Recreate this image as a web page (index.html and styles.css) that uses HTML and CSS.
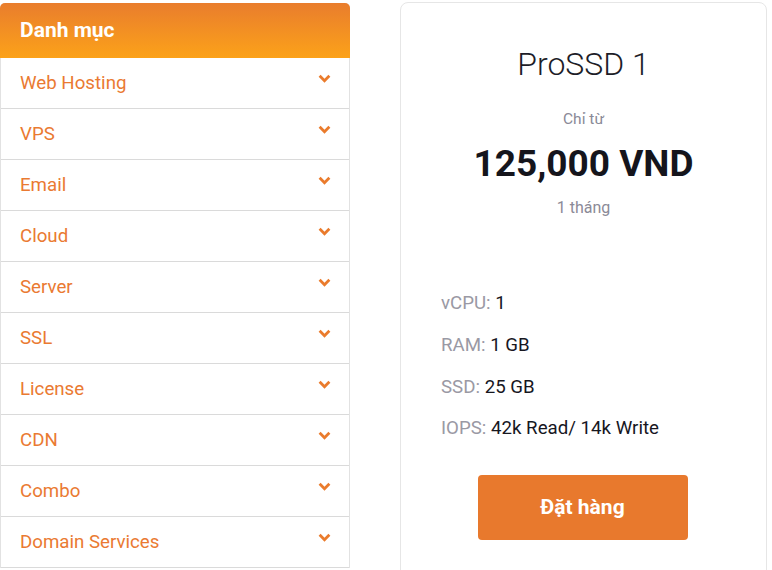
FILE: index.html
```html
<!DOCTYPE html>
<html lang="vi">
<head>
<meta charset="utf-8">
<link rel="stylesheet" href="styles.css">
</head>
<body>
<div class="page">
  <aside class="sidebar">
    <div class="sidebar-head">Danh mục</div>
    <ul class="menu">
      <li class="menu-item"><span>Web Hosting</span><svg class="chev" viewBox="0 0 12 8"><path d="M1.5 1.5 L6 6 L10.5 1.5"/></svg></li>
      <li class="menu-item"><span>VPS</span><svg class="chev" viewBox="0 0 12 8"><path d="M1.5 1.5 L6 6 L10.5 1.5"/></svg></li>
      <li class="menu-item"><span>Email</span><svg class="chev" viewBox="0 0 12 8"><path d="M1.5 1.5 L6 6 L10.5 1.5"/></svg></li>
      <li class="menu-item"><span>Cloud</span><svg class="chev" viewBox="0 0 12 8"><path d="M1.5 1.5 L6 6 L10.5 1.5"/></svg></li>
      <li class="menu-item"><span>Server</span><svg class="chev" viewBox="0 0 12 8"><path d="M1.5 1.5 L6 6 L10.5 1.5"/></svg></li>
      <li class="menu-item"><span>SSL</span><svg class="chev" viewBox="0 0 12 8"><path d="M1.5 1.5 L6 6 L10.5 1.5"/></svg></li>
      <li class="menu-item"><span>License</span><svg class="chev" viewBox="0 0 12 8"><path d="M1.5 1.5 L6 6 L10.5 1.5"/></svg></li>
      <li class="menu-item"><span>CDN</span><svg class="chev" viewBox="0 0 12 8"><path d="M1.5 1.5 L6 6 L10.5 1.5"/></svg></li>
      <li class="menu-item"><span>Combo</span><svg class="chev" viewBox="0 0 12 8"><path d="M1.5 1.5 L6 6 L10.5 1.5"/></svg></li>
      <li class="menu-item"><span>Domain Services</span><svg class="chev" viewBox="0 0 12 8"><path d="M1.5 1.5 L6 6 L10.5 1.5"/></svg></li>
    </ul>
  </aside>
  <section class="card">
    <h2 class="plan-name">ProSSD 1</h2>
    <div class="from">Chỉ từ</div>
    <div class="price">125,000 VND</div>
    <div class="period">1 tháng</div>
    <ul class="specs">
      <li><span class="lbl">vCPU:</span> <span class="val">1</span></li>
      <li><span class="lbl">RAM:</span> <span class="val">1 GB</span></li>
      <li><span class="lbl">SSD:</span> <span class="val">25 GB</span></li>
      <li><span class="lbl">IOPS:</span> <span class="val">42k Read/ 14k Write</span></li>
    </ul>
    <div class="btn-wrap"><a class="btn">Đặt hàng</a></div>
  </section>
</div>
</body>
</html>
```
FILE: styles.css
```css
* { box-sizing: border-box; }
html, body { margin: 0; padding: 0; background: #fff; }
body { font-family: Roboto, "Noto Sans", sans-serif; overflow: hidden; }
.page {
  display: flex;
  align-items: flex-start;
  gap: 50px;
  height: 570px;
  overflow: hidden;
}
.sidebar {
  width: 350px;
  flex: none;
  margin-top: 3px;
  border-left: 1px solid #e2e2e2;
  border-right: 1px solid #e2e2e2;
  border-radius: 5px 5px 0 0;
}
.sidebar-head {
  height: 55px;
  margin: 0 -1px;
  border-radius: 5px 5px 0 0;
  background: linear-gradient(to bottom, #e97d2d, #fca219);
  color: #fff;
  font-weight: 700;
  font-size: 21px;
  padding-left: 20px;
  display: flex;
  align-items: center;
  padding-bottom: 2px;
}
.menu { list-style: none; margin: 0; padding: 0; }
.menu-item {
  height: 51px;
  border-bottom: 1px solid #dadada;
  display: flex;
  align-items: center;
  justify-content: space-between;
  padding: 0 18px 0 19px;
  color: #ea7a32;
  font-size: 18.7px;
}
.chev {
  width: 13px;
  height: 9px;
  margin-top: -10px;
  fill: none;
  stroke: #ea7b2c;
  stroke-width: 2.6;
}
.card {
  width: 367px;
  flex: none;
  margin-top: 2px;
  height: 600px;
  border: 1px solid #e6e6e6;
  border-radius: 8px;
  text-align: center;
  padding-top: 41px;
}
.plan-name {
  margin: 0;
  font-weight: 300;
  font-size: 32px;
  line-height: 40px;
  color: #1d1d28;
}
.from {
  margin-top: 25px;
  font-size: 15.5px;
  color: #8b8a97;
  line-height: 20px;
}
.price {
  margin-top: 12px;
  font-size: 37px;
  font-weight: 700;
  color: #15151c;
  line-height: 46px;
}
.period {
  margin-top: 11px;
  font-size: 16px;
  color: #8b8a97;
  line-height: 20px;
}
.specs {
  list-style: none;
  margin: 74px 0 0;
  padding: 0 0 0 40px;
  text-align: left;
  font-size: 18.7px;
  line-height: 22px;
}
.specs li { margin-bottom: 19.8px; }
.lbl { color: #9a99a4; }
.val { color: #17171f; }
.btn-wrap { display: flex; justify-content: center; margin-top: 35.5px; }
.btn {
  width: 210px;
  height: 65px;
  margin-left: -2px;
  background: #e8792d;
  border-radius: 4px;
  color: #fff;
  font-weight: 700;
  font-size: 21px;
  display: flex;
  align-items: center;
  justify-content: center;
}
```
